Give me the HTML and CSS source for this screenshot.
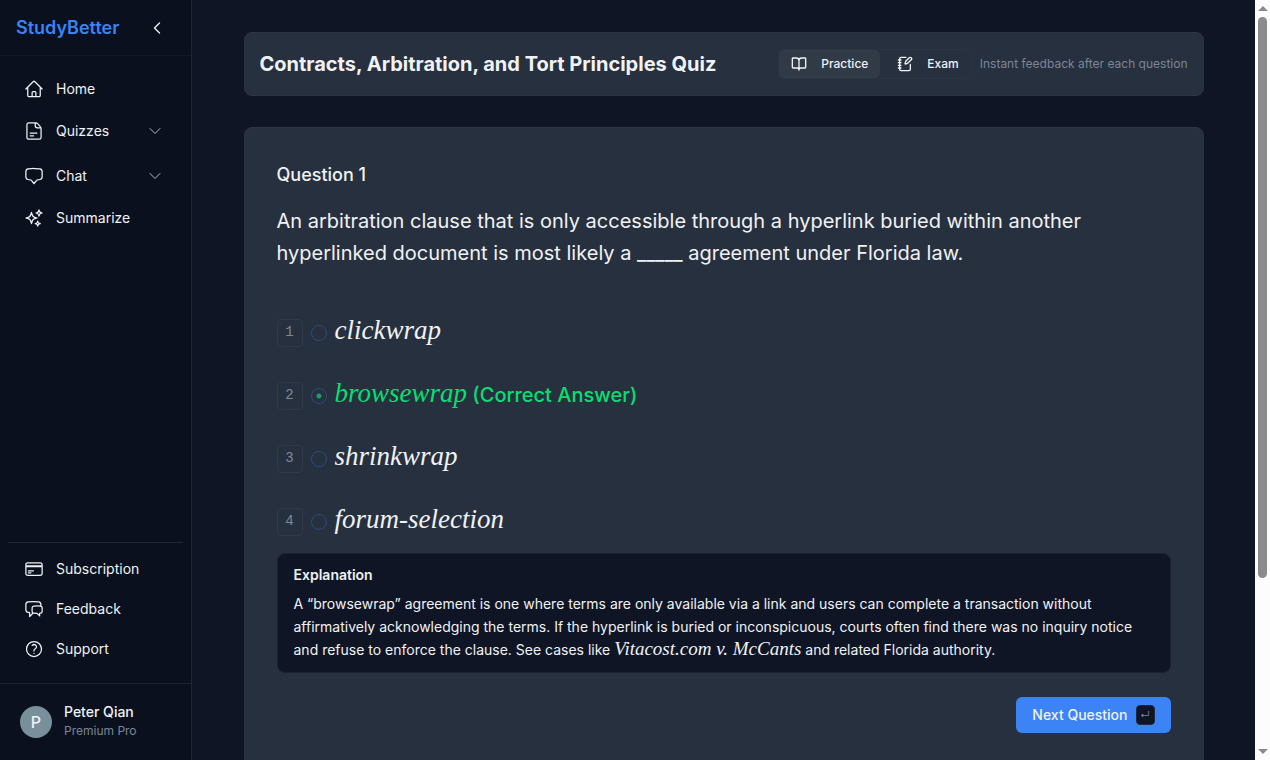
FILE: index.html
```
<!DOCTYPE html>
<html lang="en">
<head>
  <meta charset="UTF-8">
  <meta name="viewport" content="width=device-width, initial-scale=1">
  <title>StudyBetter</title>
  <link rel="stylesheet" href="styles.css">
</head>
<body>

  <aside class="sidebar">
    <div class="brand">
      <a href="#" class="logo">StudyBetter</a>
      <button class="collapse" aria-label="Collapse sidebar">
        <svg class="icon-sm" viewBox="0 0 24 24"><path d="M15.75 19.5 8.25 12l7.5-7.5"/></svg>
      </button>
    </div>

    <nav class="nav">
      <a href="#" class="nav-item">
        <svg class="icon" viewBox="0 0 24 24"><path d="m2.25 12 8.954-8.955c.44-.439 1.152-.439 1.591 0L21.75 12M4.5 9.75v10.125c0 .621.504 1.125 1.125 1.125H9.75v-4.875c0-.621.504-1.125 1.125-1.125h2.25c.621 0 1.125.504 1.125 1.125V21h4.125c.621 0 1.125-.504 1.125-1.125V9.75M8.25 21h8.25"/></svg>
        Home
      </a>
      <button class="nav-item nav-group">
        <svg class="icon" viewBox="0 0 24 24"><path d="M14 2.25H5.5A2 2 0 0 0 3.5 4.250v15.500a2 2 0 0 0 2 2h13a2 2 0 0 0 2-2V9.500c0-1.200-.4-2.300-1.200-3.100l-2.700-2.900A4 4 0 0 0 14 2.250ZM13.500 2.250v3.500a2.500 2.500 0 0 0 2.500 2.500h4M7.500 14.500h8M7.500 17.800h4"/></svg>
        Quizzes
        <svg class="icon-sm chevron" viewBox="0 0 24 24"><path d="m19.5 8.25-7.5 7.5-7.5-7.5"/></svg>
      </button>
      <button class="nav-item nav-group">
        <svg class="icon" viewBox="0 0 24 24"><path d="M12 21l-3.2-3.8c-.3-.4-.7-.6-1.2-.6a48 48 0 0 1-2.6-.4C3.4 15.9 2.25 14.5 2.25 12.9V6.74c0-1.6 1.12-3 2.7-3.23A48.4 48.4 0 0 1 12 3c2.4 0 4.74.175 7.04.513 1.59.233 2.71 1.626 2.71 3.23v6.16c0 1.6-1.15 3-2.75 3.3a48 48 0 0 1-2.6.4c-.5 0-.9.2-1.2.6Z"/></svg>
        Chat
        <svg class="icon-sm chevron" viewBox="0 0 24 24"><path d="m19.5 8.25-7.5 7.5-7.5-7.5"/></svg>
      </button>
      <a href="#" class="nav-item">
        <svg class="icon" viewBox="0 0 24 24"><path d="M9.813 15.904 9 18.75l-.813-2.846a4.5 4.5 0 0 0-3.09-3.09L2.25 12l2.846-.813a4.5 4.5 0 0 0 3.09-3.09L9 5.25l.813 2.846a4.5 4.5 0 0 0 3.09 3.09L15.75 12l-2.846.813a4.5 4.5 0 0 0-3.09 3.09ZM18.259 8.715 18 9.75l-.259-1.035a3.375 3.375 0 0 0-2.455-2.456L14.25 6l1.036-.259a3.375 3.375 0 0 0 2.455-2.456L18 2.25l.259 1.035a3.375 3.375 0 0 0 2.456 2.456L21.75 6l-1.035.259a3.375 3.375 0 0 0-2.456 2.456ZM16.894 20.567 16.5 21.75l-.394-1.183a2.25 2.25 0 0 0-1.423-1.423L13.5 18.75l1.183-.394a2.25 2.25 0 0 0 1.423-1.423l.394-1.183.394 1.183a2.25 2.25 0 0 0 1.423 1.423l1.183.394-1.183.394a2.25 2.25 0 0 0-1.423 1.423Z"/></svg>
        Summarize
      </a>
    </nav>

    <nav class="nav-bottom">
      <a href="#" class="nav-item">
        <svg class="icon" viewBox="0 0 24 24"><path d="M2.25 8.25h19.5M2.25 9h19.5m-16.5 5.25h6m-6 2.25h3m-3.75 3h15a2.25 2.25 0 0 0 2.25-2.25V6.75A2.25 2.25 0 0 0 19.5 4.5h-15a2.25 2.25 0 0 0-2.25 2.25v10.5A2.25 2.25 0 0 0 4.5 19.5Z"/></svg>
        Subscription
      </a>
      <a href="#" class="nav-item">
        <svg class="icon" viewBox="0 0 24 24"><path d="M20.25 8.511c.884.284 1.5 1.128 1.5 2.097v4.286c0 1.136-.847 2.1-1.98 2.193-.34.027-.68.052-1.02.072v3.091l-3-3c-1.354 0-2.694-.055-4.02-.163a2.115 2.115 0 0 1-.825-.242m9.345-8.334a2.126 2.126 0 0 0-.476-.095 48.64 48.64 0 0 0-8.048 0c-1.131.094-1.976 1.057-1.976 2.192v4.286c0 .837.46 1.58 1.155 1.951m9.345-8.334V6.637c0-1.621-1.152-3.026-2.76-3.235A48.455 48.455 0 0 0 11.25 3c-2.115 0-4.198.137-6.24.402-1.608.209-2.76 1.614-2.76 3.235v6.226c0 1.621 1.152 3.026 2.76 3.235.577.075 1.157.14 1.74.194V21l4.155-4.155"/></svg>
        Feedback
      </a>
      <a href="#" class="nav-item">
        <svg class="icon" viewBox="0 0 24 24"><path d="M9.879 7.519c1.171-1.025 3.071-1.025 4.242 0 1.172 1.025 1.172 2.687 0 3.712-.203.179-.43.326-.67.442-.745.361-1.45.999-1.45 1.827v.75M21 12a9 9 0 1 1-18 0 9 9 0 0 1 18 0Zm-9 5.25h.008v.008H12v-.008Z"/></svg>
        Support
      </a>
    </nav>

    <div class="user">
      <div class="avatar">P</div>
      <div>
        <div class="user-name">Peter Qian</div>
        <div class="user-plan">Premium Pro</div>
      </div>
    </div>
  </aside>

  <main class="main">
    <header class="card quiz-header">
      <h1>Contracts, Arbitration, and Tort Principles Quiz</h1>
      <div class="modes">
        <button class="mode active">
          <svg class="icon-sm bold" viewBox="0 0 24 24"><path d="M12 7v14M3 18a1 1 0 0 1-1-1V4a1 1 0 0 1 1-1h5a4 4 0 0 1 4 4 4 4 0 0 1 4-4h5a1 1 0 0 1 1 1v13a1 1 0 0 1-1 1h-6a3 3 0 0 0-3 3 3 3 0 0 0-3-3z"/></svg>
          Practice
        </button>
        <button class="mode">
          <svg class="icon-sm bold" viewBox="0 0 24 24"><path d="M13.4 2H6a2 2 0 0 0-2 2v16a2 2 0 0 0 2 2h12a2 2 0 0 0 2-2v-7.4M2 6h4M2 10h4M2 14h4M2 18h4M21.378 5.626a1 1 0 1 0-3.004-3.004l-5.01 5.012a2 2 0 0 0-.506.854l-.837 2.87a.5.5 0 0 0 .62.62l2.87-.837a2 2 0 0 0 .854-.506z"/></svg>
          Exam
        </button>
      </div>
      <p class="hint">Instant feedback after each question</p>
    </header>

    <section class="card question">
      <h2>Question 1</h2>
      <p class="prompt" id="prompt">An arbitration clause that is only accessible through a hyperlink buried within another hyperlinked document is most likely a _____ agreement under Florida law.</p>

      <div class="options" role="radiogroup" aria-labelledby="prompt">
        <div class="option">
          <kbd>1</kbd>
          <input type="radio" name="answer" id="opt1">
          <label for="opt1"><i class="math">clickwrap</i></label>
        </div>
        <div class="option correct">
          <kbd>2</kbd>
          <input type="radio" name="answer" id="opt2" checked>
          <label for="opt2"><i class="math">browsewrap</i> (Correct Answer)</label>
        </div>
        <div class="option">
          <kbd>3</kbd>
          <input type="radio" name="answer" id="opt3">
          <label for="opt3"><i class="math">shrinkwrap</i></label>
        </div>
        <div class="option">
          <kbd>4</kbd>
          <input type="radio" name="answer" id="opt4">
          <label for="opt4"><i class="math">forum-selection</i></label>
        </div>
      </div>

      <div class="explanation">
        <h3>Explanation</h3>
        <p>A “browsewrap” agreement is one where terms are only available via a link and users can complete a transaction without affirmatively acknowledging the terms. If the hyperlink is buried or inconspicuous, courts often find there was no inquiry notice and refuse to enforce the clause. See cases like <i class="math">Vitacost.com v. McCants</i> and related Florida authority.</p>
      </div>

      <div class="actions">
        <button class="next">Next Question <kbd>↵</kbd></button>
      </div>
    </section>
  </main>

  <div class="scrollbar" aria-hidden="true">
    <span class="arrow up"></span>
    <span class="thumb"></span>
    <span class="arrow down"></span>
  </div>

</body>
</html>
```
FILE: styles.css
```
* {
  box-sizing: border-box;
}

body {
  display: flex;
  height: 100vh;
  margin: 0;
  overflow: hidden;
  font-family: Inter, sans-serif;
  font-size: 14px;
  line-height: 20px;
  color: #f0f2f5;
  background-color: #0f1524;
}

h1, h2, h3, p {
  margin: 0;
}

a {
  color: inherit;
  text-decoration: none;
}

button {
  font: inherit;
  color: inherit;
  background: none;
  border: 0;
  padding: 0;
  cursor: pointer;
}

svg {
  flex-shrink: 0;
  fill: none;
  stroke: currentColor;
  stroke-width: 1.5;
  stroke-linecap: round;
  stroke-linejoin: round;
}

.icon {
  width: 20px;
  height: 20px;
}

.icon-sm {
  width: 16px;
  height: 16px;
}

.bold {
  stroke-width: 2;
}

/* Sidebar */
.sidebar {
  display: flex;
  flex-direction: column;
  flex-shrink: 0;
  width: 192px;
  background-color: #0a101d;
  border-right: 1px solid #1f2634;
}

.brand {
  display: flex;
  align-items: center;
  justify-content: space-between;
  height: 56px;
  padding: 0 26px 0 16px;
  border-bottom: 1px solid #141b28;
}

.logo {
  font-size: 18px;
  line-height: 28px;
  font-weight: 600;
  color: #3c83f6;
}

.collapse {
  display: flex;
}

.collapse svg {
  stroke-width: 2;
}

.nav {
  flex: 1;
  padding: 13px 8px 0;
}

.nav-item {
  display: flex;
  align-items: center;
  gap: 12px;
  width: 100%;
  height: 40px;
  padding: 0 16px;
  text-align: left;
}

.nav-group {
  height: 44px;
  padding-right: 20px;
}

.nav-group + .nav-group {
  margin-top: 1px;
}

.chevron {
  margin-left: auto;
  color: #b4b8bf;
}

.nav-bottom {
  margin: 0 8px;
  padding: 6px 0 14px;
  border-top: 1px solid #1f2634;
}

.user {
  display: flex;
  align-items: center;
  gap: 12px;
  height: 77px;
  padding: 0 20px;
  border-top: 1px solid #1a212f;
}

.avatar {
  width: 32px;
  height: 32px;
  border-radius: 50%;
  background-color: #78909c;
  font-size: 16px;
  line-height: 32px;
  font-weight: 500;
  text-align: center;
}

.user-name {
  font-weight: 500;
  line-height: 18px;
}

.user-plan {
  font-size: 12px;
  line-height: 20px;
  color: #7b8698;
}

/* Main column */
.main {
  display: flex;
  flex: 1;
  flex-direction: column;
  align-items: center;
  gap: 31px;
  min-width: 0;
  padding: 32px 16px 0;
  overflow: hidden;
}

.card {
  flex-shrink: 0;
  width: 100%;
  max-width: 960px;
  background-color: #27303e;
  border: 1px solid #2b3643;
  border-radius: 8px;
}

.quiz-header {
  display: flex;
  align-items: center;
  gap: 8px;
  height: 64px;
  padding: 0 15px;
}

h1 {
  flex: 1;
  font-size: 20px;
  line-height: 28px;
  font-weight: 700;
}

.modes {
  display: flex;
  border: 1px solid #2b3442;
  border-radius: 6px;
}

.mode {
  display: flex;
  align-items: center;
  gap: 14px;
  height: 28px;
  padding: 0 12px;
  border-radius: 5px;
  font-size: 12px;
  font-weight: 500;
}

.mode.active {
  margin-right: 5px;
  background-color: #313b47;
}

.hint {
  font-size: 12px;
  color: #7b8698;
}

.question {
  padding: 33px 32px 80px;
}

h2 {
  font-size: 18px;
  line-height: 28px;
  font-weight: 500;
}

.prompt {
  margin-top: 16px;
  font-size: 20px;
  line-height: 32px;
}

/* Answers */
.options {
  display: grid;
  gap: 31px;
  margin-top: 48px;
}

.option {
  display: flex;
  align-items: center;
  gap: 8px;
  height: 32px;
  font-size: 20px;
}

.option kbd {
  width: 26px;
  height: 28px;
  border: 1px solid #303947;
  border-radius: 4px;
  font-family: "Liberation Mono", monospace;
  font-size: 14px;
  line-height: 24px;
  text-align: center;
  color: #7f899a;
}

.option input {
  appearance: none;
  width: 16px;
  height: 16px;
  margin: 0;
  border: 1px solid #2d4a80;
  border-radius: 50%;
}

.option input:checked {
  background: radial-gradient(circle, #14a062 2px, transparent 3px);
}

.option label {
  padding-bottom: 3px;
  line-height: 32px;
}

.math {
  font-family: "Liberation Serif", serif;
  font-size: 27px;
  font-weight: 400;
  line-height: 1;
}

.correct {
  font-weight: 500;
  color: #05df72;
}

.explanation {
  margin-top: 15px;
  padding: 11px 16px;
  background-color: #0f1524;
  border: 1px solid #1c2432;
  border-radius: 8px;
}

.explanation h3 {
  margin-bottom: 7px;
  font-size: 14px;
  line-height: 20px;
  font-weight: 600;
}

.explanation p {
  line-height: 23px;
}

.explanation .math {
  font-size: 19px;
}

.actions {
  display: flex;
  justify-content: flex-end;
  margin-top: 24px;
}

.next {
  display: flex;
  align-items: center;
  gap: 8px;
  height: 36px;
  padding: 0 16px;
  border-radius: 6px;
  background-color: #3c83f6;
  font-weight: 500;
}

.next kbd {
  width: 19px;
  height: 20px;
  border: 1px solid #1d2a44;
  border-radius: 4px;
  background-color: #0f1524;
  font-family: Inter, sans-serif;
  font-size: 10px;
  font-weight: 400;
  line-height: 18px;
  text-align: center;
  color: #7b8698;
}

/* Page scrollbar */
.scrollbar {
  display: flex;
  flex-direction: column;
  align-items: center;
  flex-shrink: 0;
  width: 15px;
  padding: 6px 0;
  background-color: #fcfcfc;
}

.arrow {
  border: 5px solid transparent;
}

.up {
  border-top: 0;
  border-bottom-color: #8b8b8b;
}

.down {
  margin-top: auto;
  border-bottom: 0;
  border-top-color: #8b8b8b;
}

.thumb {
  width: 9px;
  height: 75%;
  margin-top: 6px;
  border-radius: 5px;
  background-color: #8b8b8b;
}
```
